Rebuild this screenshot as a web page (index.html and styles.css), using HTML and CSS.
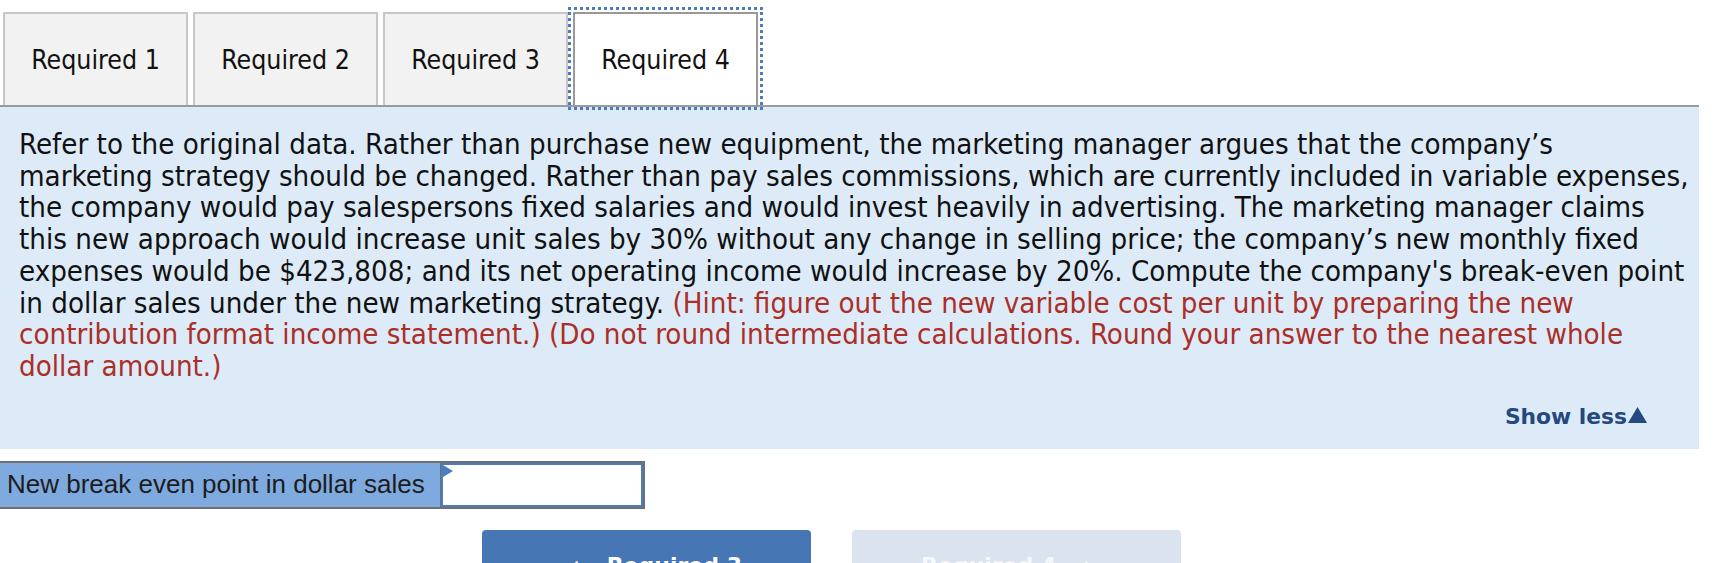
FILE: index.html
```html
<!DOCTYPE html>
<html lang="en">
<head>
<meta charset="utf-8">
<title>Required 4</title>
<link rel="stylesheet" href="styles.css">
</head>
<body>
<div class="page">
  <div class="tabs">
    <div class="tab">Required 1</div>
    <div class="tab">Required 2</div>
    <div class="tab">Required 3</div>
    <div class="tab tab-active">Required 4</div>
  </div>

  <div class="panel">
    <p class="question">Refer to the original data. Rather than purchase new equipment, the marketing manager argues that the company’s<br>marketing strategy should be changed. Rather than pay sales commissions, which are currently included in variable expenses,<br>the company would pay salespersons fixed salaries and would invest heavily in advertising. The marketing manager claims<br>this new approach would increase unit sales by 30% without any change in selling price; the company’s new monthly fixed<br>expenses would be $423,808; and its net operating income would increase by 20%. Compute the company's break-even point<br>in dollar sales under the new marketing strategy. <span class="hint">(Hint: figure out the new variable cost per unit by preparing the new<br>contribution format income statement.)</span> <span class="hint">(Do not round intermediate calculations. Round your answer to the nearest whole<br>dollar amount.)</span></p>
    <div class="toggle-row">
      <span class="show-less">Show less<svg class="tri" viewBox="0 0 19 16" width="19" height="16"><polygon points="9.5,0 19,16 0,16" fill="#24487f"/></svg></span>
    </div>
  </div>

  <div class="answer-row">
    <div class="answer-label">New break even point in dollar sales</div>
    <div class="answer-input"><span class="flag"></span></div>
  </div>

  <div class="nav">
    <div class="nav-btn nav-prev"><span class="chev">&#x2039;</span>Required 3</div>
    <div class="nav-btn nav-next">Required 4<span class="chev">&#x203A;</span></div>
  </div>
</div>
</body>
</html>
```

FILE: styles.css
```css
html {
  overflow: hidden;
}

body {
  margin: 0;
  background: #ffffff;
  font-family: "DejaVu Sans Condensed", "DejaVu Sans", sans-serif;
  color: #111111;
}

.page {
  width: 1699px;
}

.tabs {
  display: flex;
  gap: 5px;
  padding: 12px 0 0 3px;
  border-bottom: 2px solid #9b9b9b;
}

.tab {
  width: 181px;
  height: 91px;
  box-sizing: content-box;
  border: 2px solid #c7c7c7;
  border-bottom: none;
  background: #f2f2f2;
  display: flex;
  align-items: center;
  justify-content: center;
  font-size: 26.5px;
  color: #111111;
}

.tab-active {
  background: #ffffff;
  border-color: #999999;
  outline: 3px dotted #4a7cbf;
  outline-offset: 2px;
}

.panel {
  background: #ddebf8;
  padding: 22px 10px 17px 19px;
}

.question {
  margin: 0;
  font-size: 29.2px;
  line-height: 31.7px;
  color: #111111;
  white-space: nowrap;
}

.hint {
  color: #ab2e27;
}

.toggle-row {
  display: flex;
  justify-content: flex-end;
  padding-top: 18px;
  padding-right: 42px;
  height: 31px;
  align-items: center;
}

.show-less {
  display: inline-flex;
  align-items: center;
  font-family: "DejaVu Sans", sans-serif;
  font-weight: bold;
  font-size: 21.8px;
  color: #24487f;
}

.tri {
  margin-left: 1px;
  margin-top: -2px;
}

.answer-row {
  display: inline-flex;
  margin-top: 12px;
  border-top: 2px solid #6f6f6f;
  border-bottom: 2px solid #6f6f6f;
  border-right: 2px solid #6f6f6f;
  height: 44px;
}

.answer-label {
  width: 433px;
  padding-left: 7px;
  background: #7faadf;
  border-right: 1px solid #6f6f6f;
  display: flex;
  align-items: center;
  font-family: "Liberation Sans", Arial, sans-serif;
  font-size: 26px;
  color: #1c1c1c;
}

.answer-input {
  position: relative;
  width: 198px;
  border: 2px solid #4a7cbf;
  background: #ffffff;
}

.flag {
  position: absolute;
  left: 0;
  top: 0;
  width: 0;
  height: 0;
  border-top: 6px solid transparent;
  border-bottom: 6px solid transparent;
  border-left: 10px solid #4a7cbf;
}

.nav {
  display: flex;
  justify-content: center;
  gap: 41px;
  width: 1663px;
  margin-top: 21px;
}

.nav-btn {
  width: 329px;
  height: 64px;
  border-radius: 4px;
  display: flex;
  align-items: center;
  justify-content: center;
  font-family: "DejaVu Sans", sans-serif;
  font-weight: bold;
  font-size: 22px;
  color: #ffffff;
  padding-top: 8px;
  box-sizing: border-box;
}

.nav-prev {
  background: #4677b4;
}

.nav-next {
  background: #dae3ee;
  color: #f5f8fc;
}

.chev {
  font-weight: normal;
  font-size: 34px;
  margin: 0 26px 0 16px;
}

.nav-next .chev {
  margin: 0 16px 0 26px;
}
```
